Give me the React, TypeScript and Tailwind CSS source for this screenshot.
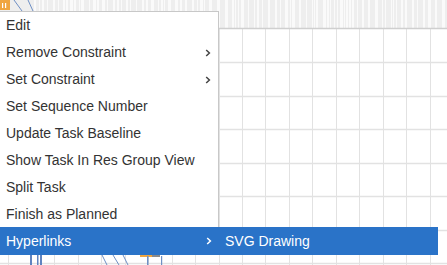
import React from "react";

const items = [
  { label: "Edit" },
  { label: "Remove Constraint", sub: true },
  { label: "Set Constraint", sub: true },
  { label: "Set Sequence Number" },
  { label: "Update Task Baseline" },
  { label: "Show Task In Res Group View" },
  { label: "Split Task" },
  { label: "Finish as Planned" },
];

function Chevron({ color }: { color: string }) {
  return (
    <svg width="6" height="8" viewBox="0 0 6 8" className="shrink-0">
      <path d="M1.2 1 L4.4 4 L1.2 7" fill="none" stroke={color} strokeWidth="1.5" />
    </svg>
  );
}

function Background() {
  // pseudo-random stripes in header
  const stripes: { x: number; w: number }[] = [];
  let seed = 7;
  const rnd = () => {
    seed = (seed * 9301 + 49297) % 233280;
    return seed / 233280;
  };
  let x = 34;
  while (x < 447) {
    const w = 1 + Math.floor(rnd() * 3);
    stripes.push({ x, w });
    x += w + 1 + Math.floor(rnd() * 5);
  }
  const vlines: number[] = [];
  for (let i = 0; i < 20; i++) vlines.push(7.5 + i * 23.45);
  const hlines = [62, 96, 129, 163, 196, 230, 263];
  return (
    <svg width="447" height="265" className="block">
      <rect x="0" y="0" width="447" height="265" fill="#ffffff" />
      <rect x="0" y="0" width="447" height="28" fill="#eeeeee" />
      {stripes.map((s, i) => (
        <rect key={i} x={s.x} y={0} width={s.w} height={28} fill="#fafafa" />
      ))}
      {vlines.map((v, i) => (
        <line key={i} x1={Math.round(v) + 0.5} y1={28} x2={Math.round(v) + 0.5} y2={265} stroke="#e2e2e2" strokeWidth="1" />
      ))}
      {hlines.map((h, i) => (
        <line key={i} x1={0} y1={h + 0.5} x2={447} y2={h + 0.5} stroke="#e2e2e2" strokeWidth="1.5" />
      ))}
      <line x1="0" y1="28.5" x2="447" y2="28.5" stroke="#cfcfcf" strokeWidth="1.5" />
      {/* top-left orange task marker */}
      <rect x="0" y="0" width="10" height="10" fill="#f0a640" />
      <rect x="2" y="3" width="1.2" height="5" fill="#ffffff" />
      <rect x="5" y="3" width="1.2" height="5" fill="#ffffff" />
      <line x1="14" y1="0" x2="22" y2="11" stroke="#6e8fc4" strokeWidth="1" />
      <line x1="28" y1="0" x2="33" y2="11" stroke="#6e8fc4" strokeWidth="1" />
      {/* bottom diagram fragments */}
      <rect x="30" y="255" width="2" height="10" fill="#5f83c0" />
      <rect x="37" y="255" width="1.5" height="10" fill="#5f83c0" />
      <rect x="40" y="255" width="2" height="10" fill="#5f83c0" />
      <line x1="102" y1="255" x2="107" y2="265" stroke="#6e8fc4" strokeWidth="1" />
      <line x1="113" y1="255" x2="119" y2="265" stroke="#6e8fc4" strokeWidth="1" />
      <line x1="123" y1="255" x2="128" y2="265" stroke="#6e8fc4" strokeWidth="1" />
      <rect x="140" y="255" width="12" height="2" fill="#f0a640" />
      <rect x="152" y="255" width="8" height="2" fill="#8a8a8a" />
      <rect x="147" y="256" width="1.5" height="9" fill="#6e8fc4" />
      <rect x="161" y="256" width="1.2" height="9" fill="#6e8fc4" />
    </svg>
  );
}

export default function App() {
  return (
    <div
      className="relative w-[447px] h-[265px] overflow-hidden bg-white"
      style={{ fontFamily: '"Liberation Sans", Arial, sans-serif' }}
    >
      <Background />
      <div className="absolute left-0 top-[11px] w-[219px] bg-white border-t border-r border-[#c8c8c8] flex flex-col">
        {items.map((it) => (
          <div
            key={it.label}
            className="h-[27px] flex items-center justify-between pl-[6px] pr-[7px] text-[14px] text-[#333333]"
          >
            <span>{it.label}</span>
            {it.sub && <Chevron color="#444444" />}
          </div>
        ))}
        <div className="relative -mt-px -mr-px h-[28px] flex items-center justify-between pl-[6px] pr-[7px] text-[14px] text-white bg-[#2a73c8]">
          <span>Hyperlinks</span>
          <Chevron color="#ffffff" />
          <div className="absolute left-[219px] top-0 w-[219px] h-[28px] bg-[#2a73c8] flex items-center pl-[6px] text-[14px] text-white">
            SVG Drawing
          </div>
        </div>
      </div>
    </div>
  );
}
